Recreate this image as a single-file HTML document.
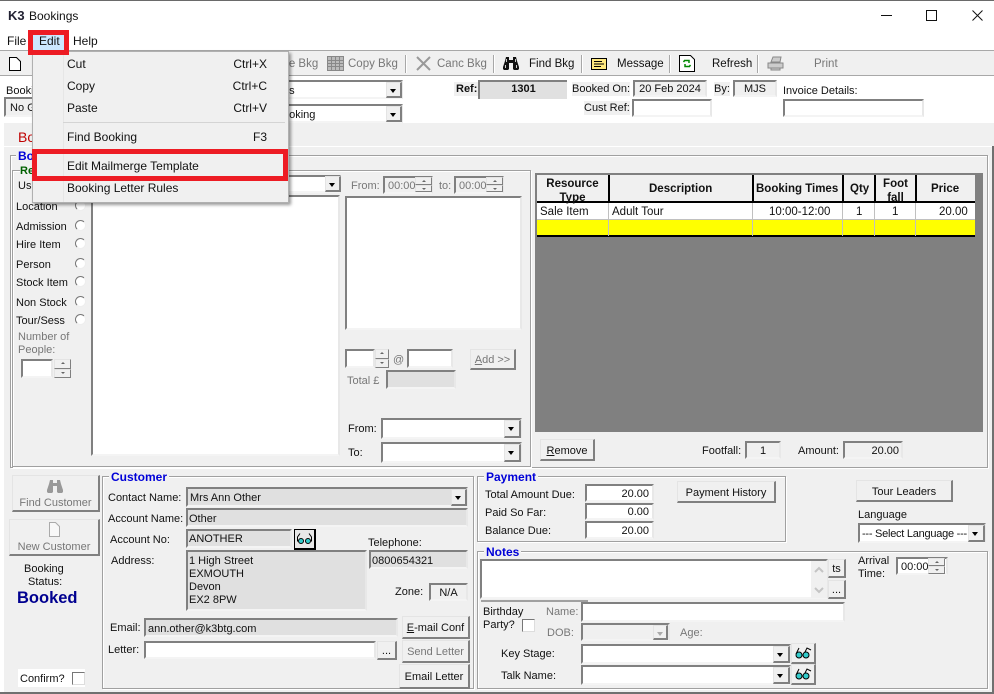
<!DOCTYPE html>
<html><head><meta charset="utf-8"><title>Bookings</title>
<style>
html,body{margin:0;padding:0;width:994px;height:694px;overflow:hidden;background:#fff}
body{position:relative;font:11px/14px "Liberation Sans",sans-serif;color:#111}
body *{position:absolute;box-sizing:border-box}
body svg *{position:static}
.t{white-space:nowrap;margin-top:1px}
.m{font-size:12px;margin-top:0}
.k{font-size:11.5px;margin-top:0}
.g{color:#777}
.h{font-weight:bold;color:#0000d8;background:#f0f0f0;padding:0 2px;font-size:12px;margin-top:0}
.f{background:#fff;border:2px solid;border-color:#808080 #e8e8e8 #f4f4f4 #808080;white-space:nowrap;line-height:14px;padding:2px 2px 0;overflow:hidden}
.d{background:#e0e0e0}
.n{background:#f0f0f0}
.r{text-align:right}
.b{background:#f0f0f0;border:1px solid;border-color:#e4e4e4 #808080 #808080 #e4e4e4;border-width:1px 2px 2px 1px;display:flex;align-items:center;justify-content:center;white-space:nowrap;padding-top:2px}
.ar{background:#f0f0f0;border:1px solid;border-color:#e4e4e4 #808080 #808080 #e4e4e4;border-width:1px 2px 2px 1px}
.ar::after{content:"";position:absolute;left:3px;top:6px;border-left:3.5px solid transparent;border-right:3.5px solid transparent;border-top:4px solid #000}
.ar.x::after{border-top-color:#aaa}
.u,.v{background:#f0f0f0;border:1px solid;border-color:#e4e4e4 #808080 #808080 #e4e4e4;left:0;width:100%;height:50%}
.u{top:0}.v{bottom:0}
.u::after,.v::after{content:"";position:absolute;left:50%;top:2px;margin-left:-2px;border:2px solid transparent}
.u::after{border-bottom-color:#666;border-top:0}
.v::after{border-top-color:#666;border-bottom:0}
.fr{border:1px solid #a0a0a0;box-shadow:1px 1px 0 #fff,inset 1px 1px 0 #fff}
.sep{width:2px;top:55px;height:18px;background:#a8a8a8;border-right:1px solid #fff}
.rd{width:11px;height:11px;border-radius:50%;border:1px solid;border-color:#777 #eee #eee #777;background:#fff}
.ck{width:13px;height:13px;background:#fff;border:1px solid;border-color:#777 #ddd #ddd #777}
</style></head><body>

<div style="left:0;top:0;width:994px;height:1px;background:#6a6a6a"></div>
<span class="t" style="left:8px;top:8px;font-weight:bold;font-size:13px;color:#223">K3</span>
<span class="t m" style="left:29px;top:9px">Bookings</span>
<svg style="left:875px;top:5px" width="115" height="20" fill="none" stroke="#111" stroke-width="1"><path d="M6 10.500H17M51.500 5.500H61.500V15.500H51.500ZM97.500 5.500L107.500 15.500M107.500 5.500L97.500 15.500"/></svg>

<span class="t m" style="left:7px;top:34px">File</span>
<div style="left:33px;top:35px;width:31px;height:15px;background:#cce8ff"></div>
<span class="t m" style="left:39px;top:34px">Edit</span>
<span class="t m" style="left:73px;top:34px">Help</span>

<!-- toolbar -->
<div style="left:0;top:50px;width:994px;height:26px;background:#f0f0f0;border-top:1px solid #a8a8a8;border-bottom:1px solid #a8a8a8"></div>
<svg style="left:8px;top:56px" width="14" height="16" fill="#fff" stroke="#000"><path d="M1.500 1.500H8.500L12.500 5.500V14.500H1.500Z"/></svg>
<span class="t g k" style="left:269px;top:57px">Save Bkg</span>
<svg style="left:327px;top:56px" width="17" height="15" fill="#bbb" stroke="#888"><path d="M.5.500H16.500V14.500H.5ZM.5 4.500H16.500M.5 7.500H16.500M.5 10.500H16.500M4.500.5V14.500M8.500.5V14.500M12.500.5V14.500"/></svg>
<span class="t g k" style="left:348px;top:57px">Copy Bkg</span>
<div class="sep" style="left:405px"></div>
<svg style="left:416px;top:56px" width="15" height="15" stroke="#999" stroke-width="2"><path d="M1 1L14 14M14 1L1 14"/></svg>
<span class="t g k" style="left:437px;top:57px">Canc Bkg</span>
<div class="sep" style="left:493px"></div>
<svg style="left:503px;top:56px" width="16" height="14"><path d="M3 1h3v3h4V1h3l1 4 2 6v2l-1 1h-4l-1-1V7H6v6l-1 1H1l-1-1v-2l2-6z" fill="#111"/><path d="M3.500 3V6M12.500 3V6M2.500 9V12M13.500 9V12" stroke="#ccc"/></svg>
<span class="t k" style="left:529px;top:57px">Find Bkg</span>
<div class="sep" style="left:581px"></div>
<svg style="left:591px;top:58px" width="16" height="12"><rect x=".5" y=".5" width="15" height="11" fill="#ffe97f" stroke="#000"/><path d="M3 3.500H11M3 6H13M3 8.500H10" stroke="#000"/></svg>
<span class="t k" style="left:617px;top:57px">Message</span>
<div class="sep" style="left:669px"></div>
<svg style="left:679px;top:55px" width="17" height="17" fill="none"><path d="M.5.500H11.500L15.500 4.500V16.500H.5Z" fill="#fff" stroke="#000"/><path d="M6 5.500H10V8M10 11.500H6V9M6 5L4.500 7M10 12l1.500-2" stroke="#080" stroke-width="1.500"/></svg>
<span class="t k" style="left:712px;top:57px">Refresh</span>
<div class="sep" style="left:757px"></div>
<svg style="left:767px;top:56px" width="17" height="15"><path d="M4 6L6 1H14L13 6ZM1 7H16V12H1ZM4 12H13V14H4Z" fill="#ccc" stroke="#888"/></svg>
<span class="t g k" style="left:814px;top:57px">Print</span>

<!-- header fields -->
<span class="t" style="left:6px;top:83px">Booking</span>
<div class="f n" style="left:4px;top:97px;width:40px;height:20px;padding-left:4px">No Group</div>
<div class="f" style="left:270px;top:80px;width:133px;height:19px;padding-left:13px;border-left:0">ns</div>
<div class="ar" style="left:386px;top:82px;width:16px;height:16px"></div>
<div class="f" style="left:270px;top:104px;width:133px;height:19px;padding-left:13px;border-left:0">ooking</div>
<div class="ar" style="left:386px;top:106px;width:16px;height:16px"></div>
<span class="t n" style="left:454px;top:81px;font-weight:bold;padding:0 2px">Ref:</span>
<div style="left:478px;top:80px;width:89px;height:19px;background:#e0e0e0;border-top:2px solid #808080;border-left:2px solid #808080;text-align:center;font-weight:bold;line-height:15px">1301</div>
<span class="t n" style="left:572px;top:81px">Booked On:</span>
<div class="f n" style="left:633px;top:80px;width:74px;height:17px;text-align:center;padding:0">20 Feb 2024</div>
<span class="t n" style="left:714px;top:81px">By:</span>
<div class="f n" style="left:733px;top:80px;width:44px;height:17px;text-align:center;padding:0">MJS</div>
<span class="t" style="left:783px;top:83px">Invoice Details:</span>
<span class="t n" style="left:584px;top:100px">Cust Ref:</span>
<div class="f" style="left:632px;top:99px;width:80px;height:18px"></div>
<div class="f" style="left:783px;top:99px;width:141px;height:18px"></div>

<!-- main -->
<div style="left:4px;top:123px;width:990px;height:570px;background:#f0f0f0"></div>
<div style="left:4px;top:146px;width:988px;height:1px;background:#fff"></div>
<div style="left:992px;top:146px;width:2px;height:547px;background:#707070"></div>
<div style="left:0;top:692px;width:994px;height:2px;background:#707070"></div>
<span class="t" style="left:18px;top:128px;font-size:14px;line-height:16px;color:#c00000">Booking</span>

<!-- bookings group -->
<div class="fr" style="left:10px;top:155px;width:978px;height:313px"></div>
<span class="t h" style="left:16px;top:149px">Booking</span>
<div class="fr" style="left:12px;top:170px;width:519px;height:297px"></div>
<span class="t" style="left:20px;top:163px;font-weight:bold;color:#006000;background:#f0f0f0">Re</span>
<span class="t" style="left:18px;top:178px">Use</span>
<span class="t" style="left:16px;top:199px">Location</span>
<span class="t" style="left:16px;top:219px">Admission</span>
<span class="t" style="left:16px;top:237px">Hire Item</span>
<span class="t" style="left:16px;top:257px">Person</span>
<span class="t" style="left:16px;top:275px">Stock Item</span>
<span class="t" style="left:16px;top:295px">Non Stock</span>
<span class="t" style="left:16px;top:313px">Tour/Sess</span>
<div class="rd" style="left:75px;top:200px"></div>
<div class="rd" style="left:75px;top:220px"></div>
<div class="rd" style="left:75px;top:238px"></div>
<div class="rd" style="left:75px;top:258px"></div>
<div class="rd" style="left:75px;top:276px"></div>
<div class="rd" style="left:75px;top:296px"></div>
<div class="rd" style="left:75px;top:314px"></div>
<span class="t g" style="left:18px;top:329px">Number of</span>
<span class="t g" style="left:18px;top:342px">People:</span>
<div class="f" style="left:21px;top:359px;width:32px;height:19px"></div>
<div style="left:54px;top:359px;width:17px;height:19px"><div class="u"></div><div class="v"></div></div>

<div class="f" style="left:270px;top:175px;width:71px;height:18px"></div>
<div class="ar" style="left:325px;top:176px;width:16px;height:16px"></div>
<div class="f" style="left:91px;top:195px;width:249px;height:261px"></div>

<span class="t g" style="left:351px;top:178px">From:</span>
<div class="f n g" style="left:383px;top:176px;width:50px;height:18px;padding:1px 3px 0">00:00</div>
<div style="left:415px;top:177px;width:17px;height:15px"><div class="u"></div><div class="v"></div></div>
<span class="t g" style="left:439px;top:178px">to:</span>
<div class="f n g" style="left:454px;top:176px;width:50px;height:18px;padding:1px 3px 0">00:00</div>
<div style="left:486px;top:177px;width:17px;height:15px"><div class="u"></div><div class="v"></div></div>
<div class="f" style="left:345px;top:196px;width:177px;height:134px"></div>
<div class="f" style="left:345px;top:349px;width:30px;height:19px"></div>
<div style="left:375px;top:349px;width:14px;height:19px"><div class="u"></div><div class="v"></div></div>
<span class="t g" style="left:393px;top:352px">@</span>
<div class="f" style="left:407px;top:349px;width:46px;height:19px"></div>
<div class="b g" style="left:470px;top:349px;width:46px;height:21px"><u style="position:static">A</u>dd &gt;&gt;</div>
<span class="t g" style="left:347px;top:373px">Total £</span>
<div class="f d" style="left:386px;top:370px;width:70px;height:19px"></div>
<span class="t" style="left:348px;top:421px">From:</span>
<div class="f" style="left:381px;top:418px;width:141px;height:21px"></div>
<div class="ar" style="left:504px;top:420px;width:17px;height:18px"></div>
<span class="t" style="left:348px;top:445px">To:</span>
<div class="f" style="left:381px;top:442px;width:141px;height:21px"></div>
<div class="ar" style="left:504px;top:444px;width:17px;height:18px"></div>

<!-- grid -->
<div style="left:535px;top:173px;width:448px;height:259px;background:#808080"></div>
<div style="left:537px;top:175px;width:438px;height:28px;background:#f0f0f0;border-bottom:2px solid #000"></div>
<div style="left:537px;top:203px;width:438px;height:17px;background:#fff;border-bottom:1px solid #c0c0c0"></div>
<div style="left:537px;top:220px;width:438px;height:17px;background:#ff0;border-bottom:2px solid #000"></div>
<div style="left:608px;top:175px;width:2px;height:27px;background:#000"></div>
<div style="left:752px;top:175px;width:2px;height:27px;background:#000"></div>
<div style="left:842px;top:175px;width:2px;height:27px;background:#000"></div>
<div style="left:874px;top:175px;width:2px;height:27px;background:#000"></div>
<div style="left:915px;top:175px;width:2px;height:27px;background:#000"></div>
<div style="left:608px;top:203px;width:1px;height:33px;background:#c0c0c0"></div>
<div style="left:752px;top:203px;width:1px;height:33px;background:#c0c0c0"></div>
<div style="left:842px;top:203px;width:1px;height:33px;background:#c0c0c0"></div>
<div style="left:874px;top:203px;width:1px;height:33px;background:#c0c0c0"></div>
<div style="left:915px;top:203px;width:1px;height:33px;background:#c0c0c0"></div>
<div style="left:537px;top:177px;width:71px;height:27px;text-align:center;font-weight:bold;font-size:11.500px;overflow:hidden">Resource<br><span style="position:static">Type</span></div>
<span class="t" style="left:649px;top:181px;font-weight:bold;font-size:11.500px">Description</span>
<span class="t" style="left:756px;top:181px;font-weight:bold;font-size:11.500px">Booking Times</span>
<span class="t" style="left:850px;top:181px;font-weight:bold;font-size:11.500px">Qty</span>
<div style="left:876px;top:177px;width:39px;height:27px;text-align:center;font-weight:bold;font-size:11.500px">Foot<br><span style="position:static">fall</span></div>
<span class="t" style="left:931px;top:181px;font-weight:bold;font-size:11.500px">Price</span>
<span class="t" style="left:540px;top:204px;font-size:11.500px">Sale Item</span>
<span class="t" style="left:612px;top:204px;font-size:11.500px">Adult Tour</span>
<span class="t" style="left:769px;top:204px;font-size:11.500px">10:00-12:00</span>
<span class="t" style="left:856px;top:204px;font-size:11.500px">1</span>
<span class="t" style="left:892px;top:204px;font-size:11.500px">1</span>
<span class="t" style="left:939px;top:204px;font-size:11.500px">20.00</span>

<div class="b" style="left:540px;top:439px;width:55px;height:22px"><u style="position:static">R</u>emove</div>
<span class="t" style="left:702px;top:443px">Footfall:</span>
<div class="f n" style="left:745px;top:441px;width:36px;height:18px;text-align:center;padding:1px 0 0">1</div>
<span class="t" style="left:798px;top:443px">Amount:</span>
<div class="f n r" style="left:843px;top:441px;width:60px;height:18px;padding:1px 2px 0">20.00</div>

<!-- left bottom -->
<div class="b g" style="left:12px;top:475px;width:88px;height:37px;padding-top:20px">Find Customer</div>
<svg style="left:47px;top:479px" width="16" height="14"><path d="M3 1h3v3h4V1h3l1 4 2 6v2l-1 1h-4l-1-1V7H6v6l-1 1H1l-1-1v-2l2-6z" fill="#999"/></svg>
<div class="b g" style="left:9px;top:519px;width:91px;height:37px;padding-top:20px">New Customer</div>
<svg style="left:48px;top:522px" width="13" height="15" fill="#f8f8f8" stroke="#aaa"><path d="M1.500.5H7.500L11.500 4.500V14.500H1.500Z"/></svg>
<span class="t" style="left:24px;top:561px">Booking</span>
<span class="t" style="left:28px;top:574px">Status:</span>
<span class="t" style="left:17px;top:589px;font-size:16.500px;line-height:17px;font-weight:bold;color:#000090">Booked</span>
<div style="left:18px;top:669px;width:67px;height:18px;background:#fff"></div>
<span class="t" style="left:20px;top:671px">Confirm?</span>
<div class="ck" style="left:72px;top:672px"></div>

<!-- customer -->
<div class="fr" style="left:102px;top:476px;width:372px;height:213px"></div>
<span class="t h" style="left:109px;top:470px">Customer</span>
<span class="t" style="left:108px;top:490px">Contact Name:</span>
<div class="f d" style="left:186px;top:487px;width:282px;height:20px">Mrs Ann Other</div>
<div class="ar" style="left:451px;top:489px;width:16px;height:17px"></div>
<span class="t" style="left:108px;top:511px">Account Name:</span>
<div class="f d" style="left:186px;top:508px;width:282px;height:19px;padding-left:1px">Other</div>
<span class="t" style="left:110px;top:532px">Account No:</span>
<div class="f d" style="left:186px;top:529px;width:106px;height:19px;padding:1px 1px 0">ANOTHER</div>
<div style="left:294px;top:529px;width:22px;height:21px;background:#e8e8e8;border:1px solid #000;border-width:1px 2px 2px 1px"></div>
<svg style="left:296px;top:532px" width="17" height="14" fill="none" stroke="#000"><path d="M1.500 9.500V5L4 1.500M15.500 9.500V5L13 1.500"/><circle cx="5" cy="9" r="2.500" fill="#3cc"/><circle cx="12" cy="9" r="2.500" fill="#3cc"/></svg>
<span class="t" style="left:368px;top:535px">Telephone:</span>
<div class="f d" style="left:369px;top:550px;width:99px;height:19px;padding-left:1px">0800654321</div>
<span class="t" style="left:111px;top:553px">Address:</span>
<div class="f d" style="left:186px;top:550px;width:181px;height:61px;line-height:13px;white-space:pre;padding:3px 1px 0 1px">1 High Street
EXMOUTH
Devon
EX2 8PW</div>
<span class="t" style="left:395px;top:584px">Zone:</span>
<div class="f n" style="left:429px;top:583px;width:39px;height:18px;text-align:center;padding:1px 0 0">N/A</div>
<span class="t" style="left:110px;top:620px">Email:</span>
<div class="f d" style="left:144px;top:618px;width:254px;height:19px">ann.other@k3btg.com</div>
<div class="b" style="left:402px;top:616px;width:68px;height:23px"><u style="position:static">E</u>-mail Conf</div>
<span class="t" style="left:108px;top:642px">Letter:</span>
<div class="f" style="left:144px;top:641px;width:232px;height:18px"></div>
<div class="b" style="left:377px;top:641px;width:20px;height:19px">...</div>
<div class="b g" style="left:402px;top:640px;width:68px;height:23px">Send Letter</div>
<div class="b" style="left:399px;top:664px;width:71px;height:25px">Email Letter</div>

<!-- payment -->
<div class="fr" style="left:477px;top:476px;width:309px;height:66px"></div>
<span class="t h" style="left:484px;top:470px">Payment</span>
<span class="t" style="left:485px;top:487px">Total Amount Due:</span>
<span class="t" style="left:485px;top:505px">Paid So Far:</span>
<span class="t" style="left:485px;top:523px">Balance Due:</span>
<div class="f r" style="left:585px;top:484px;width:69px;height:18px;padding:1px 3px">20.00</div>
<div class="f r" style="left:585px;top:503px;width:69px;height:17px;padding:0 3px">0.00</div>
<div class="f r" style="left:585px;top:521px;width:69px;height:18px;padding:1px 3px">20.00</div>
<div class="b" style="left:677px;top:481px;width:99px;height:22px">Payment History</div>
<div class="b" style="left:856px;top:480px;width:97px;height:22px">Tour Leaders</div>
<span class="t" style="left:858px;top:507px">Language</span>
<div class="f" style="left:858px;top:523px;width:128px;height:20px;padding:2px 2px 0;letter-spacing:-.25px">--- Select Language ---</div>
<div class="ar" style="left:968px;top:525px;width:17px;height:17px"></div>

<!-- notes -->
<div class="fr" style="left:477px;top:551px;width:511px;height:138px"></div>
<span class="t h" style="left:484px;top:545px">Notes</span>
<div class="f" style="left:480px;top:559px;width:348px;height:40px"></div>
<div style="left:811px;top:561px;width:16px;height:37px;background:#f0f0f0"></div>
<svg style="left:812px;top:566px" width="14" height="28" fill="none" stroke="#c4c4c4" stroke-width="2"><path d="M3 6L7 2L11 6M3 22L7 26L11 22"/></svg>
<div class="b" style="left:828px;top:559px;width:18px;height:19px">ts</div>
<div class="b" style="left:828px;top:580px;width:18px;height:19px">...</div>
<div style="left:481px;top:600px;width:107px;height:2px;background:#a0a0a0"></div>
<span class="t" style="left:483px;top:604px">Birthday</span>
<span class="t" style="left:483px;top:617px">Party?</span>
<div class="ck" style="left:522px;top:619px"></div>
<span class="t g" style="left:546px;top:604px">Name:</span>
<div class="f" style="left:581px;top:602px;width:264px;height:20px"></div>
<span class="t g" style="left:547px;top:625px">DOB:</span>
<div class="f n" style="left:581px;top:623px;width:89px;height:18px"></div>
<div class="ar x" style="left:653px;top:625px;width:15px;height:15px"></div>
<span class="t g" style="left:680px;top:625px">Age:</span>
<span class="t" style="left:501px;top:646px">Key Stage:</span>
<div class="f" style="left:581px;top:644px;width:210px;height:20px"></div>
<div class="ar" style="left:773px;top:646px;width:17px;height:17px"></div>
<div class="b" style="left:791px;top:643px;width:25px;height:21px"></div>
<svg style="left:794px;top:646px" width="19" height="14" fill="none" stroke="#000"><path d="M2 8L5 2M10 8L13 2L17 4"/><circle cx="5" cy="9" r="3" fill="#3cc"/><circle cx="12" cy="9" r="3" fill="#3cc"/></svg>
<span class="t" style="left:501px;top:668px">Talk Name:</span>
<div class="f" style="left:581px;top:665px;width:210px;height:20px"></div>
<div class="ar" style="left:773px;top:667px;width:17px;height:17px"></div>
<div class="b" style="left:791px;top:664px;width:25px;height:21px"></div>
<svg style="left:794px;top:667px" width="19" height="14" fill="none" stroke="#000"><path d="M2 8L5 2M10 8L13 2L17 4"/><circle cx="5" cy="9" r="3" fill="#3cc"/><circle cx="12" cy="9" r="3" fill="#3cc"/></svg>
<span class="t" style="left:858px;top:553px">Arrival</span>
<span class="t" style="left:858px;top:566px">Time:</span>
<div class="f" style="left:896px;top:557px;width:52px;height:18px;padding:1px 3px 0">00:00</div>
<div style="left:928px;top:558px;width:17px;height:16px"><div class="u"></div><div class="v"></div></div>

<!-- menu -->
<div style="left:32px;top:51px;width:257px;height:152px;background:#f0f0f0;border:1px solid #b0b0b0;box-shadow:2px 2px 3px rgba(0,0,0,.4)"></div>
<div style="left:63px;top:52px;width:1px;height:150px;background:#e6e6e6"></div>
<div style="left:63px;top:122px;width:222px;height:1px;background:#d4d4d4"></div>
<div style="left:63px;top:150px;width:222px;height:1px;background:#d4d4d4"></div>
<span class="t m" style="left:67px;top:57px">Cut</span><span class="t m" style="right:727px;top:57px">Ctrl+X</span>
<span class="t m" style="left:67px;top:79px">Copy</span><span class="t m" style="right:727px;top:79px">Ctrl+C</span>
<span class="t m" style="left:67px;top:101px">Paste</span><span class="t m" style="right:727px;top:101px">Ctrl+V</span>
<span class="t m" style="left:67px;top:130px">Find Booking</span><span class="t m" style="right:727px;top:130px">F3</span>
<span class="t m" style="left:67px;top:159px">Edit Mailmerge Template</span>
<span class="t m" style="left:67px;top:181px">Booking Letter Rules</span>

<!-- red highlights -->
<div style="left:28px;top:30px;width:41px;height:25px;border:5px solid #ed1c24"></div>
<div style="left:32px;top:149px;width:256px;height:32px;border:5px solid #ed1c24"></div>
</body></html>
